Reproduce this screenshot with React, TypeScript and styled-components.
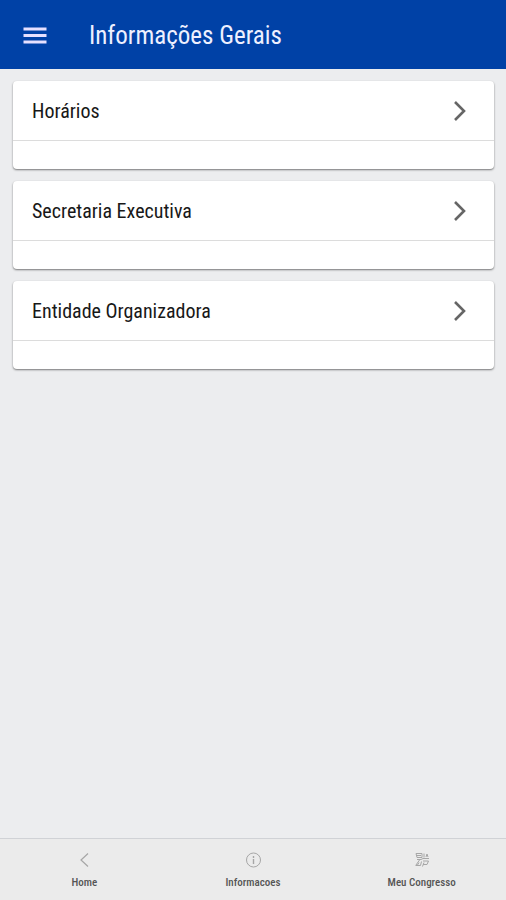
import React from "react";
import styled, { createGlobalStyle } from "styled-components";

const GlobalStyle = createGlobalStyle`
  * { box-sizing: border-box; }
  html, body { margin: 0; background: #ecedef; }
  body, button { font-family: "Roboto Condensed", "Liberation Sans Narrow", Roboto, sans-serif; }
`;

const Screen = styled.div`
  display: flex;
  flex-direction: column;
  min-height: 100vh;
`;

const Header = styled.header`
  display: flex;
  align-items: center;
  gap: 32px;
  min-height: 69px;
  padding: 2px 12px 0;
  background: #0041a6;
  color: #eef0ff;
`;

const MenuButton = styled.button`
  display: flex;
  align-items: center;
  justify-content: center;
  width: 45px;
  height: 45px;
  padding: 0;
  border: 0;
  background: none;
  color: #e6e0ff;
`;

const Title = styled.h1`
  margin: 0;
  font-size: 25px;
  line-height: 32px;
  font-weight: 400;
`;

const CardList = styled.main`
  flex: 1;
  display: flex;
  flex-direction: column;
  gap: 12px;
  padding: 12px 12px 12px 13px;
`;

const Card = styled.section`
  overflow: hidden;
  border-radius: 4px;
  background: #fff;
  box-shadow: 0 1px 2px rgba(0, 0, 0, 0.5);
`;

const CardButton = styled.button`
  display: flex;
  align-items: center;
  justify-content: space-between;
  width: 100%;
  height: 60px;
  padding: 1px 27px 0 19px;
  border: 0;
  border-bottom: 1px solid #dcdcdc;
  background: none;
  color: #181818;
  font-size: 20px;
  line-height: 24px;
  text-align: left;
`;

const CardBody = styled.div`
  height: 28px;
`;

const TabBar = styled.nav`
  display: grid;
  grid-template-columns: repeat(3, 1fr);
  height: 62px;
  border-top: 1px solid #d0d2d6;
  background: #ebebeb;
`;

const Tab = styled.a`
  display: flex;
  flex-direction: column;
  align-items: center;
  gap: 8px;
  padding-top: 13px;
  color: #555;
  font-size: 11px;
  line-height: 14px;
  font-weight: 500;
  text-decoration: none;

  svg { color: #a6a6a6; }
`;

const MenuIcon = () => (
  <svg width="24" height="18" viewBox="0 0 24 18" fill="currentColor" aria-hidden="true">
    <path d="M0.500 0.500h23v3h-23zM0.500 7h23v3h-23zM0.500 13.500h23v3h-23z" />
  </svg>
);

const ChevronIcon = () => (
  <svg width="14" height="22" viewBox="0 0 14 22" fill="none" stroke="#666" strokeWidth="2.600" aria-hidden="true">
    <path d="M2 2l9 9-9 9" />
  </svg>
);

const BackIcon = () => (
  <svg width="16" height="16" viewBox="0 0 16 16" fill="none" stroke="currentColor" strokeWidth="1.200" aria-hidden="true">
    <path d="M12 1.500L5 8l7 6.500" />
  </svg>
);

const InfoIcon = () => (
  <svg width="16" height="16" viewBox="0 0 16 16" fill="none" stroke="currentColor" aria-hidden="true">
    <circle cx="8.500" cy="8" r="7" />
    <path d="M8.500 4v2M8.500 7v5" strokeWidth="1.400" />
  </svg>
);

const CongressIcon = () => (
  <svg width="16" height="16" viewBox="0 0 16 16" fill="none" stroke="currentColor" aria-hidden="true">
    <path d="M2 1.500h6v4h-5zM3 3.500h4M10 1.500v4M12 5l1-3 1 3M3 7.500h4l2-1h6M5.500 8L2 13M9 9h5.500l-1.500 3.500H9M1.500 13.500h5l1-4M5 10.500L3.500 13M8.500 14.500l1.500-4" />
  </svg>
);

const sections = ["Horários", "Secretaria Executiva", "Entidade Organizadora"];

const tabs = [
  { label: "Home", Icon: BackIcon },
  { label: "Informacoes", Icon: InfoIcon },
  { label: "Meu Congresso", Icon: CongressIcon },
];

export default function App() {
  return (
    <Screen>
      <GlobalStyle />
      <Header>
        <MenuButton aria-label="Menu"><MenuIcon /></MenuButton>
        <Title>Informações Gerais</Title>
      </Header>
      <CardList>
        {sections.map((name) => (
          <Card key={name}>
            <CardButton>{name}<ChevronIcon /></CardButton>
            <CardBody />
          </Card>
        ))}
      </CardList>
      <TabBar>
        {tabs.map(({ label, Icon }) => (
          <Tab key={label} href="#"><Icon />{label}</Tab>
        ))}
      </TabBar>
    </Screen>
  );
}
